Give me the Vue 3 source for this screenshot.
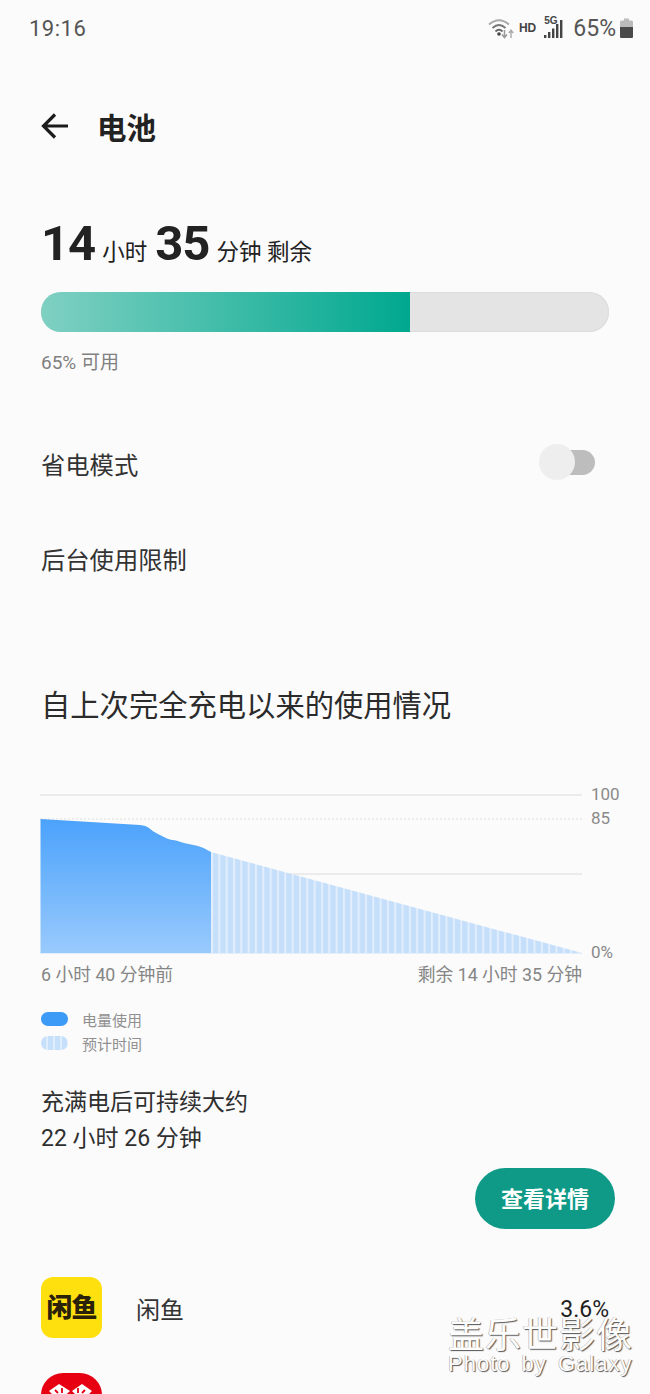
<script setup>
const apps = [
  { name: '闲鱼', pct: '3.6%', kind: 'xianyu' },
  { kind: 'pdd' }
]
const bluePath = 'M40.5 819 L140 825 Q146 825.5 149 828 Q152 831 157 833.5 L167 838.5 Q170 840 176 840.5 L184 843 L198 846 Q204 847.5 211 852 L211 953 L40.5 953 Z'
</script>

<template>
  <div class="page">
    <div class="status-bar">
      <span class="clock">19:16</span>
      <div class="status-right">
        <svg class="wifi" width="27" height="22" viewBox="0 0 27 22">
          <path d="M1 7.5 Q11 -1 21 7.5" fill="none" stroke="#a8a8a8" stroke-width="1.9" />
          <path d="M4.5 11 Q11 5 17.5 11" fill="none" stroke="#777" stroke-width="1.9" />
          <path d="M7.5 14.5 Q11 11 14.5 14.5" fill="none" stroke="#666" stroke-width="1.8" />
          <circle cx="11" cy="17" r="1.8" fill="#444" />
          <path d="M16.5 13 V20 M14 17.5 L16.5 20.5 L19 17.5" fill="none" stroke="#999" stroke-width="1.5" />
          <path d="M23 21 V13.5 M20.8 16 L23 13.2 L25.2 16" fill="none" stroke="#aaa" stroke-width="1.4" />
        </svg>
        <span class="hd">HD</span>
        <div class="signal">
          <span class="five-g">5G</span>
          <svg width="19" height="20" viewBox="0 0 19 20">
            <rect x="0" y="16" width="2.4" height="3" fill="#444" />
            <rect x="4" y="13" width="2.4" height="6" fill="#444" />
            <rect x="8" y="9.5" width="2.4" height="9.5" fill="#444" />
            <rect x="12" y="5" width="2.4" height="14" fill="#444" />
            <rect x="16" y="1" width="2.4" height="18" fill="#444" />
          </svg>
        </div>
        <span class="battery-pct">65%</span>
        <svg class="battery" width="13" height="20" viewBox="0 0 13 20">
          <path d="M4 0.5 H9 V2.5 H11.5 Q13 2.5 13 4 V18.5 Q13 20 11.5 20 H1.5 Q0 20 0 18.5 V4 Q0 2.5 1.5 2.5 H4 Z" fill="#bbb" />
          <path d="M0 9 H13 V18.5 Q13 20 11.5 20 H1.5 Q0 20 0 18.5 Z" fill="#4a4a4a" />
        </svg>
      </div>
    </div>

    <header class="title-bar">
      <svg width="28" height="26" viewBox="0 0 28 26">
        <path d="M27 13 H3 M14 1.5 L2.5 13 L14 24.5" fill="none" stroke="#1c1c1c" stroke-width="3.2" />
      </svg>
      <h1>电池</h1>
    </header>

    <section class="remain">
      <span class="big">14</span><span class="unit">小时</span><span class="big second">35</span><span class="unit">分钟 剩余</span>
    </section>
    <div class="bar"><div class="bar-fill"></div></div>
    <p class="avail">65% 可用</p>

    <div class="setting save">
      <span>省电模式</span>
      <div class="toggle"><span class="knob"></span></div>
    </div>
    <div class="setting limit"><span>后台使用限制</span></div>

    <h2 class="usage-title">自上次完全充电以来的使用情况</h2>

    <svg class="chart" width="650" height="176" viewBox="0 785 650 176">
      <defs>
        <linearGradient id="blueFill" x1="0" y1="0" x2="0" y2="1">
          <stop offset="0" stop-color="#4ba2fb" />
          <stop offset="1" stop-color="#99cafd" />
        </linearGradient>
        <pattern id="stripes" x="211" y="0" width="7.33" height="10" patternUnits="userSpaceOnUse">
          <rect width="7.33" height="10" fill="#e2eefc" />
          <rect x="2" width="5.33" height="10" fill="#c5dffb" />
        </pattern>
      </defs>
      <line x1="40" y1="795" x2="582" y2="795" stroke="#e6e6e6" stroke-width="1.5" />
      <line x1="40" y1="819" x2="582" y2="819" stroke="#dedede" stroke-width="1" stroke-dasharray="2 2" />
      <line x1="211" y1="874" x2="582" y2="874" stroke="#e6e6e6" stroke-width="1.5" />
      <path :d="bluePath" fill="url(#blueFill)" />
      <path d="M211 852 L582 953 L211 953 Z" fill="url(#stripes)" />
      <line x1="40" y1="953.5" x2="582" y2="953.5" stroke="#e3eefb" stroke-width="1" />
      <text x="591" y="800" class="axis">100</text>
      <text x="591" y="824" class="axis">85</text>
      <text x="591" y="958" class="axis">0%</text>
    </svg>

    <div class="time-labels">
      <span>6 小时 40 分钟前</span>
      <span>剩余 14 小时 35 分钟</span>
    </div>

    <div class="legend">
      <div class="legend-row"><span class="pill solid"></span><span>电量使用</span></div>
      <div class="legend-row"><span class="pill striped"></span><span>预计时间</span></div>
    </div>

    <p class="full-charge">充满电后可持续大约<br />22 小时 26 分钟</p>

    <div class="btn-row"><button class="details">查看详情</button></div>

    <ul class="app-list">
      <li v-for="app in apps" :key="app.kind" class="app-row">
        <div v-if="app.kind === 'xianyu'" class="icon xianyu">闲鱼</div>
        <div v-else class="icon pdd">
          <svg width="61" height="61" viewBox="0 0 61 61">
            <path d="M8 18 L18 11 L29 18 L18 28 Z M31 18 L41 11 L51 18 L41 28 Z" fill="#fff" />
            <path d="M14 17 L17 20 M21 15 V20 M37 15 V20 M44 17 L41 20" stroke="#e60012" stroke-width="1.8" />
          </svg>
        </div>
        <span v-if="app.name" class="app-name">{{ app.name }}</span>
        <span v-if="app.pct" class="app-pct">{{ app.pct }}</span>
      </li>
    </ul>

    <div class="watermark">
      <div class="wm-cn">盖乐世影像</div>
      <div class="wm-en">Photo by Galaxy</div>
    </div>
  </div>
</template>

<style>
html, body {
  margin: 0;
  background: #fbfbfb;
}
</style>

<style scoped>
.page {
  position: relative;
  width: 650px;
  height: 1394px;
  overflow: hidden;
  background: #fbfbfb;
  font-family: Roboto, "Noto Sans CJK SC", sans-serif;
  color: #2b2b2b;
}

.status-bar {
  height: 58px;
  padding: 0 17px 2px 29px;
  box-sizing: border-box;
  display: flex;
  justify-content: space-between;
  align-items: center;
  color: #555;
}
.clock {
  font-size: 22px;
  letter-spacing: 0.5px;
}
.status-right {
  display: flex;
  align-items: center;
}
.wifi {
  margin-right: 4px;
}
.hd {
  font-size: 12px;
  font-weight: 700;
  color: #444;
  margin-right: 8px;
  font-family: "Liberation Sans", sans-serif;
}
.signal {
  position: relative;
  width: 21px;
  height: 22px;
  margin-right: 8px;
  display: flex;
  align-items: flex-end;
}
.five-g {
  position: absolute;
  left: 0;
  top: -2px;
  font-size: 10px;
  font-weight: 700;
  color: #444;
  font-family: "Liberation Sans", sans-serif;
}
.battery-pct {
  font-size: 23px;
  margin-right: 4px;
}

.title-bar {
  height: 56px;
  margin-top: 40px;
  padding-left: 41px;
  display: flex;
  align-items: center;
}
.title-bar h1 {
  margin: 0 0 0 28px;
  font-size: 29.5px;
  font-weight: 700;
  color: #222;
}

.remain {
  margin-top: 60px;
  padding-left: 41px;
  height: 60px;
  display: flex;
  align-items: baseline;
  color: #222;
  white-space: pre;
}
.big {
  font-size: 49px;
  font-weight: 700;
  line-height: 60px;
  letter-spacing: -1px;
}
.second {
  margin-left: 8px;
}
.unit {
  margin-left: 7px;
  font-size: 22.5px;
}

.bar {
  margin: 18px 41px 0;
  height: 40px;
  box-sizing: border-box;
  border-radius: 20px;
  background: #e4e4e4;
  box-shadow: inset 0 0 0 1px #dcdcdc;
  overflow: hidden;
}
.bar-fill {
  width: 369px;
  height: 100%;
  background: linear-gradient(90deg, #7fd0c2, #00a88f);
}

.avail {
  margin: 20px 0 0 41px;
  font-size: 19px;
  line-height: 22px;
  color: #808080;
}

.setting {
  padding: 0 55px 0 41px;
  display: flex;
  justify-content: space-between;
  align-items: center;
  font-size: 24.3px;
  line-height: 36px;
  color: #333;
}
.save {
  margin-top: 74px;
}
.limit {
  margin-top: 59px;
}
.toggle {
  position: relative;
  width: 38px;
  height: 25px;
  margin-top: -8px;
  border-radius: 13px;
  background: #bdbdbd;
}
.knob {
  position: absolute;
  left: -18px;
  top: -6px;
  width: 36px;
  height: 36px;
  border-radius: 50%;
  background: #eeeeee;
}

.usage-title {
  margin: 106px 0 0 41px;
  font-size: 29.3px;
  font-weight: 400;
  line-height: 42px;
  color: #2b2b2b;
}

.chart {
  display: block;
  margin-top: 58px;
}
.axis {
  font-size: 17px;
  fill: #8a8a8a;
}

.time-labels {
  margin: 3px 68px 0 41px;
  display: flex;
  justify-content: space-between;
  font-size: 17.8px;
  line-height: 22px;
  color: #858585;
}

.legend {
  margin: 23px 0 0 41px;
  display: flex;
  flex-direction: column;
  gap: 4px;
  font-size: 15px;
  color: #909090;
}
.legend-row {
  display: flex;
  align-items: center;
  height: 20px;
}
.pill {
  width: 27px;
  height: 14px;
  border-radius: 7px;
  margin-right: 14px;
}
.solid {
  background: #3d9bf8;
}
.striped {
  background: repeating-linear-gradient(90deg, #c6e0fb 0 5px, #dfedfc 5px 7px);
}

.full-charge {
  margin: 32px 0 0 41px;
  font-size: 23px;
  line-height: 36px;
  color: #2f2f2f;
}

.btn-row {
  display: flex;
  justify-content: flex-end;
  margin-top: 11px;
  padding-right: 35px;
}
.details {
  width: 140px;
  height: 61px;
  padding: 0 0 3px;
  border: none;
  border-radius: 31px;
  background: #0f9a88;
  color: #fff;
  font-family: inherit;
  font-size: 22px;
  font-weight: 700;
}

.app-list {
  list-style: none;
  margin: 48px 0 0;
  padding: 0 41px;
  display: flex;
  flex-direction: column;
  gap: 35px;
}
.app-row {
  display: flex;
  align-items: center;
  height: 61px;
}
.icon {
  width: 61px;
  height: 61px;
  flex: none;
  overflow: hidden;
  border-radius: 12px;
}
.xianyu {
  background: #ffe00f;
  color: #2a2208;
  font-size: 26px;
  font-weight: 900;
  line-height: 62px;
  text-align: center;
  letter-spacing: -1px;
}
.pdd {
  background: #e60012;
  border-radius: 22px;
}
.app-name {
  margin-left: 34px;
  margin-top: 1px;
  font-size: 24px;
  color: #333;
}
.app-pct {
  margin-left: auto;
  margin-top: 3px;
  font-size: 23px;
  color: #1f1f1f;
}

.watermark {
  position: absolute;
  left: 448px;
  top: 1312px;
  color: #fdfdfd;
  text-shadow: 1px 1px 1px #555, -0.5px -0.5px 0 #aaa;
  font-family: "Noto Sans CJK SC", sans-serif;
}
.wm-cn {
  font-size: 36px;
  line-height: 40px;
  letter-spacing: 1px;
  white-space: nowrap;
}
.wm-en {
  font-size: 22px;
  line-height: 23px;
  letter-spacing: 1px;
  word-spacing: 4px;
  white-space: nowrap;
  font-family: "Liberation Sans", sans-serif;
}
</style>
